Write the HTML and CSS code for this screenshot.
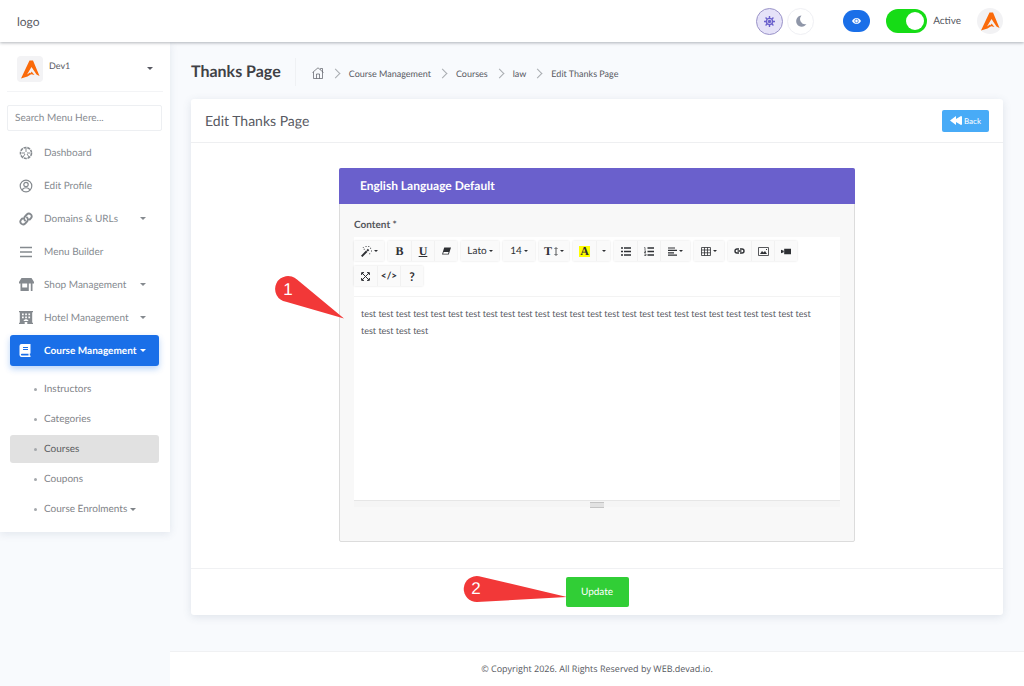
FILE: index.html
```html
<!DOCTYPE html>
<html lang="en">
<head>
    <meta charset="UTF-8">
    <meta name="viewport" content="width=device-width, initial-scale=1.0">
    <title>Edit Thanks Page</title>
    <link rel="stylesheet" href="styles.css">
</head>
<body>
    <svg class="sprite" aria-hidden="true">
        <symbol id="brand" viewBox="0 0 26 26">
            <path fill="#fa6a0a" d="M12.500 4.500h3.500L22.500 20l-3-1.500L14.500 11l-4.500 7.500 3-2 1.500 1.500-4 2.500L4 22.500z"/>
            <path fill="#fa6a0a" d="M14.500 15.500l3 3.500-4-1z"/>
        </symbol>
    </svg>

    <header class="topbar">
        <a class="logo" href="#">logo</a>
        <div class="topbar-tools">
            <button class="theme-btn selected" type="button" aria-label="Light theme">
                <svg viewBox="0 0 16 16" width="11" height="11" fill="none" stroke="#6a60cc">
                    <circle cx="8" cy="8" r="4.500" stroke-width="2"/>
                    <circle cx="8" cy="8" r="2.500" fill="#6a60cc" stroke="none"/>
                    <path stroke-width="2" d="M8 0v3M8 13v3M0 8h3M13 8h3M2.300 2.300l2 2M11.700 11.700l2 2M2.300 13.700l2-2M11.700 4.300l2-2"/>
                </svg>
            </button>
            <button class="theme-btn" type="button" aria-label="Dark theme">
                <svg viewBox="0 0 12 12" width="12" height="12" fill="#8f96a8"><path d="M6.500.5a5.600 5.600 0 1 0 5 8.600A5.200 5.200 0 0 1 6.500.5z"/></svg>
            </button>
            <button class="view-btn" type="button" aria-label="View site">
                <svg viewBox="0 0 18 12" width="9" height="6"><path fill="#fff" d="M0 6c4-8 14-8 18 0-4 8-14 8-18 0z"/><circle cx="9" cy="6" r="3.500" fill="none" stroke="#1a6fe8" stroke-width="1.500"/></svg>
            </button>
            <label class="switch"><input type="checkbox" checked><span>Active</span></label>
            <a class="avatar" href="#" aria-label="Account"><svg width="26" height="26"><use href="#brand"/></svg></a>
        </div>
    </header>

    <div class="layout">
        <nav class="sidebar">
            <div class="user">
                <svg class="user-pic" width="26" height="26"><use href="#brand"/></svg>
                <span class="user-name">Dev1</span>
                <i class="caret"></i>
            </div>
            <input class="search" type="search" placeholder="Search Menu Here..." aria-label="Search menu">
            <a class="nav-link" href="#">
                <svg viewBox="0 0 14 14" width="14" height="14" fill="none" stroke="currentColor"><circle cx="7" cy="7" r="5.500" stroke-width="1.600" stroke-dasharray="3 .8"/><path d="M7 2v4M3 7h3M11 7H8M4 11l2-3M10 11L8 8"/></svg>
                <span>Dashboard</span>
            </a>
            <a class="nav-link" href="#">
                <svg viewBox="0 0 14 14" width="14" height="14" fill="none" stroke="currentColor" stroke-width="1.200"><circle cx="7" cy="7" r="5.800"/><circle cx="7" cy="5.500" r="2.200"/><path d="M3.200 11c1-3 6.600-3 7.600 0"/></svg>
                <span>Edit Profile</span>
            </a>
            <a class="nav-link" href="#">
                <svg viewBox="0 0 14 14" width="14" height="14" fill="none" stroke="currentColor" stroke-width="1.900" stroke-linecap="round"><path d="M6 8.500c-1.200-1-1.200-2.800 0-4l1.800-2c2.600-2.600 6.600 1 4.200 3.600l-1.300 1.400M8 5.500c1.200 1 1.200 2.800 0 4l-1.800 2C3.600 14.100-.4 10.500 2 7.900l1.300-1.400"/></svg>
                <span>Domains &amp; URLs</span><i class="caret"></i>
            </a>
            <a class="nav-link" href="#">
                <svg viewBox="0 0 14 14" width="14" height="14" stroke="currentColor" stroke-width="1.500"><path d="M1 2.500h12M1 7h12M1 11.500h12"/></svg>
                <span>Menu Builder</span>
            </a>
            <a class="nav-link" href="#">
                <svg viewBox="0 0 15 13" width="15" height="13" fill="currentColor"><path d="M2.500 0h10L15 4v1.500H0V4zM1.500 5.500h1.700v4h5v-4h1.600V13H1.500zM11.800 5.500h1.700V13h-1.700z"/></svg>
                <span>Shop Management</span><i class="caret"></i>
            </a>
            <a class="nav-link" href="#">
                <svg viewBox="0 0 14 13" width="14" height="13" fill="currentColor"><path fill-rule="evenodd" d="M0 0h14v1.200h-.8v10.600h.8V13H8.300v-2H5.700v2H0v-1.200h.8V1.200H0zM3 2.500v1.700h1.700V2.500zM6.200 2.500v1.700h1.700V2.500zM9.400 2.500v1.700h1.700V2.500zM3 5.500v1.700h1.700V5.500zM6.200 5.500v1.700h1.700V5.500zM9.400 5.500v1.700h1.700V5.500zM4.500 10h5C9 7.700 5 7.700 4.500 10z"/></svg>
                <span>Hotel Management</span><i class="caret"></i>
            </a>
            <a class="nav-link active" href="#">
                <svg viewBox="0 0 12 13" width="12" height="13" fill="currentColor"><path fill-rule="evenodd" d="M2.500 0H11.500v9.500h-.7v2h.7V13h-9A2.300 2.300 0 0 1 .5 11V2A2 2 0 0 1 2.500 0zM4 3v1h5V3zM4 5v1h5V5zM2.800 9.700a.9.900 0 0 0 0 1.800h6.700V9.700z"/></svg>
                <span>Course Management</span><i class="caret"></i>
            </a>
            <ul class="subnav">
                <li><a href="#">Instructors</a></li>
                <li><a href="#">Categories</a></li>
                <li><a class="current" href="#">Courses</a></li>
                <li><a href="#">Coupons</a></li>
                <li><a href="#">Course Enrolments <i class="caret"></i></a></li>
            </ul>
        </nav>

        <div class="page">
            <main>
                <div class="page-head">
                    <h1>Thanks Page</h1>
                    <ol class="breadcrumb">
                        <li><a href="#" aria-label="Home"><svg viewBox="0 0 12 12" width="12" height="12" fill="none" stroke="currentColor" stroke-width=".7"><path d="M.5 5.500L6 .8l5.500 4.700M1.500 5v6.500h9V1.500h-2v1M4.500 11.500V7h3v4.500"/></svg></a></li>
                        <li><a href="#">Course Management</a></li>
                        <li><a href="#">Courses</a></li>
                        <li><a href="#">law</a></li>
                        <li><a href="#">Edit Thanks Page</a></li>
                    </ol>
                </div>

                <form class="card">
                    <div class="card-head">
                        <h2>Edit Thanks Page</h2>
                        <a class="back-btn" href="#">
                            <svg viewBox="0 0 12 9" width="12" height="9" fill="#fff"><path d="M6 0v3l5-3q1 0 1 1v7q0 1-1 1L6 6v3L0 4.500z"/></svg>
                            Back
                        </a>
                    </div>

                    <div class="card-body">
                        <section class="panel">
                            <h3>English Language Default</h3>
                            <div class="panel-body">
                                <label class="field-label" for="content">Content *</label>
                                <div class="editor">
                                    <div class="toolbar">
                                        <div class="group">
                                            <button class="wide" type="button" aria-label="Style"><svg viewBox="0 0 12 12" width="11" height="11" fill="currentColor"><path d="M0 10.500L5.500 5 7 6.500 1.500 12zM6 4.500L7.500 3 9 4.500 7.500 6zM2 1h1v1H2zM5 0h1v1H5zM8 0h1v1H8zM10 2h1v1h-1zM11 5h1v1h-1zM9 8h1v1H9zM3 3h1v1H3z"/></svg><i class="caret"></i></button>
                                        </div>
                                        <div class="group">
                                            <button class="serif" type="button" aria-label="Bold">B</button>
                                            <button class="serif under" type="button" aria-label="Underline">U</button>
                                            <button type="button" aria-label="Remove font style"><svg viewBox="0 0 10 8" width="9" height="8"><path fill="currentColor" d="M2.500 0H10L7.500 8H0z"/><path fill="#fff" d="M1.800 5.200h5.500L6.800 7H1.300z"/></svg></button>
                                        </div>
                                        <div class="group"><button class="font" type="button">Lato<i class="caret"></i></button></div>
                                        <div class="group"><button class="size" type="button">14<i class="caret"></i></button></div>
                                        <div class="group"><button class="wide serif" type="button" aria-label="Line height">T<svg viewBox="0 0 4 9" width="4" height="9" fill="none" stroke="currentColor" stroke-width=".8"><path d="M2 1v7M.5 2L2 .5 3.500 2M.5 7L2 8.500 3.500 7"/></svg><i class="caret"></i></button></div>
                                        <div class="group">
                                            <button class="serif" type="button" aria-label="Text colour"><mark>A</mark></button>
                                            <button class="narrow" type="button" aria-label="More colours"><i class="caret"></i></button>
                                        </div>
                                        <div class="group">
                                            <button type="button" aria-label="Bulleted list"><svg viewBox="0 0 10 9" width="10" height="9" stroke="currentColor" stroke-width="1.300"><path d="M0 1h2M0 4.500h2M0 8h2M3 1h7M3 4.500h7M3 8h7"/></svg></button>
                                            <button type="button" aria-label="Numbered list"><svg viewBox="0 0 10 9" width="10" height="9" fill="none" stroke="currentColor"><path stroke-width="1.300" d="M3.500 1H10M3.500 4.500H10M3.500 8H10"/><path stroke-width=".7" d="M.4.5H1V3M.3 4H2L.3 5.500H2M.3 7H2v1.500H.3"/></svg></button>
                                            <button class="wide" type="button" aria-label="Paragraph"><svg viewBox="0 0 9 9" width="9" height="9" stroke="currentColor" stroke-width="1.200"><path d="M0 1h7M0 3.400h9M0 5.800h6M0 8.200h9"/></svg><i class="caret"></i></button>
                                        </div>
                                        <div class="group"><button class="wide" type="button" aria-label="Table"><svg viewBox="0 0 10 9" width="10" height="9" fill="none" stroke="currentColor" stroke-width=".8"><path d="M.5.5h9v8h-9zM.5 3h9M.5 5.800h9M3.500.5v8M6.500.5v8"/></svg><i class="caret"></i></button></div>
                                        <div class="group">
                                            <button type="button" aria-label="Link"><svg viewBox="0 0 11 6" width="11" height="6" fill="none" stroke="currentColor" stroke-width="1.400"><path d="M5 1H3a2 2 0 0 0 0 4h2M6 1h2a2 2 0 0 1 0 4H6M3.500 3h4"/></svg></button>
                                            <button type="button" aria-label="Picture"><svg viewBox="0 0 11 9" width="11" height="9"><path fill="none" stroke="currentColor" stroke-width=".8" d="M.5.5h10v8H.5z"/><path fill="currentColor" d="M2 7l2-3 1.500 1.500L7 4l2 3zM8 2h1v1H8z"/></svg></button>
                                            <button type="button" aria-label="Video"><svg viewBox="0 0 11 7" width="10" height="7" fill="currentColor"><path d="M3.500.5H11v6H3.500zM0 1.500l3 1.300v1.500L0 5.500z"/></svg></button>
                                        </div>
                                        <div class="group">
                                            <button type="button" aria-label="Full screen"><svg viewBox="0 0 9 9" width="9" height="9" fill="none" stroke="currentColor"><path d="M1 1l7 7M8 1L1 8M.6 3V.6H3M6 .6h2.400V3M.6 6v2.400H3M6 8.400h2.400V6"/></svg></button>
                                            <button class="code" type="button" aria-label="Code view">&lt;/&gt;</button>
                                            <button class="help" type="button" aria-label="Help">?</button>
                                        </div>
                                    </div>
                                    <textarea id="content" spellcheck="false">test test test test test test test test test test test test test test test test test test test test test test test test test test test test test test</textarea>
                                    <div class="resize-bar"></div>
                                </div>
                            </div>
                            <svg class="callout callout-one" viewBox="0 0 70 46" width="70" height="46">
                                <path fill="#f23838" d="M22 4.500L69 43.500 11 26.800A13 13 0 1 1 22 4.500z"/>
                                <text x="13" y="20">1</text>
                            </svg>
                        </section>
                    </div>

                    <div class="card-foot">
                        <div class="submit">
                            <button class="update-btn" type="button">Update</button>
                            <svg class="callout callout-two" viewBox="0 0 105 28" width="105" height="28">
                                <path fill="#f23838" d="M16 1.200L104 22 14 27A13 13 0 1 1 16 1.200z"/>
                                <text x="13" y="19">2</text>
                            </svg>
                        </div>
                    </div>
                </form>
            </main>
            <footer>© Copyright 2026. All Rights Reserved by WEB.devad.io.</footer>
        </div>
    </div>
</body>
</html>
```
FILE: styles.css
```css
* {
    box-sizing: border-box;
}
body {
    margin: 0;
    min-height: 100vh;
    display: flex;
    flex-direction: column;
    background-color: #f8fafd;
    color: #575962;
    font-family: Lato, sans-serif;
    font-size: 10px;
    text-rendering: geometricPrecision;
}
a {
    color: inherit;
    text-decoration: none;
}
h1, h2, h3 {
    margin: 0;
}
button, input, textarea {
    font-family: inherit;
    font-size: 10px;
    text-rendering: inherit;
}
button {
    padding: 0;
    border: none;
    cursor: pointer;
}
svg {
    flex-shrink: 0;
}
.sprite {
    position: absolute;
    width: 0;
    height: 0;
}
.caret {
    width: 6px;
    border: 3px solid transparent;
    border-top-color: currentColor;
    border-bottom: none;
}

/* top bar */
.topbar {
    height: 42px;
    padding: 0 21px 0 17px;
    display: flex;
    align-items: center;
    justify-content: space-between;
    background-color: #fff;
    box-shadow: 0 1px 3px rgba(60, 70, 80, 0.4);
    position: relative;
}
.logo {
    font-size: 12px;
}
.topbar-tools {
    display: flex;
    align-items: center;
}
.theme-btn {
    width: 27px;
    height: 27px;
    margin-right: 4px;
    display: flex;
    align-items: center;
    justify-content: center;
    background-color: #fff;
    border: 1px solid #eff0f4;
    border-radius: 50%;
}
.theme-btn.selected {
    background-color: #e5e2f8;
    border-color: #9a93c8;
}
.view-btn {
    width: 27px;
    height: 22px;
    margin: 0 16px 0 25px;
    display: flex;
    align-items: center;
    justify-content: center;
    background-color: #1a6fe8;
    border-radius: 11px;
}
.switch {
    display: flex;
    align-items: center;
    gap: 6px;
}
.switch input {
    appearance: none;
    width: 41px;
    height: 24px;
    margin: 0;
    padding: 3px;
    background-color: #16dc16;
    border-radius: 12px;
}
.switch input::before {
    content: "";
    display: block;
    width: 18px;
    height: 18px;
    background-color: #fff;
    border-radius: 50%;
}
.switch input:checked::before {
    margin-left: auto;
}
.avatar {
    width: 26px;
    height: 26px;
    margin-left: 16px;
    background-color: #f2f2f4;
    border-radius: 50%;
}

/* sidebar */
.layout {
    flex: 1;
    display: flex;
    align-items: stretch;
}
.sidebar {
    width: 170px;
    align-self: flex-start;
    padding: 14px 7px 7px;
    background-color: #fff;
    box-shadow: 0 2px 8px rgba(69, 90, 120, 0.12);
}
.user {
    height: 36px;
    padding: 0 10px;
    display: flex;
    align-items: flex-start;
    border-bottom: 1px solid #f3f4f6;
}
.user-pic {
    background-color: #f3f3f5;
    border-radius: 4px;
}
.user-name {
    margin: 4px auto 0 6px;
    font-size: 9px;
}
.user .caret {
    margin-top: 11px;
}
.search {
    width: 155px;
    height: 26px;
    margin: 13px 0 6px;
    padding: 0 7px;
    border: 1px solid #edeff2;
    border-radius: 2px;
    outline: none;
}
.search::placeholder {
    color: #888b91;
}
.nav-link {
    height: 31px;
    margin: 0 4px 2px 3px;
    display: grid;
    grid-template-columns: 30px 1fr 19px;
    align-items: center;
    padding-left: 4px;
    color: #858a8f;
    border-radius: 3px;
}
.nav-link svg {
    justify-self: start;
    margin-left: 5px;
}
.nav-link.active {
    background-color: #1a6fe8;
    color: #fff;
    font-weight: bold;
    box-shadow: 0 3px 6px rgba(26, 111, 232, 0.3);
}
.subnav {
    margin: 9px 4px 0 3px;
    padding: 0;
    list-style: none;
}
.subnav a {
    height: 28px;
    margin-bottom: 2px;
    padding-left: 24px;
    display: flex;
    align-items: center;
    color: #7f8388;
    border-radius: 3px;
}
.subnav a::before {
    content: "";
    width: 3px;
    height: 3px;
    margin-right: 7px;
    background-color: #a4a8ac;
    border-radius: 50%;
}
.subnav .caret {
    margin-left: 3px;
}
.subnav .current {
    background-color: #e1e1e1;
    color: #5a5c60;
}

/* page */
.page {
    flex: 1;
    min-width: 0;
    display: flex;
    flex-direction: column;
}
main {
    flex: 1;
    padding: 16px 21px 36px;
}
.page-head {
    height: 28px;
    margin-bottom: 13px;
    display: flex;
    align-items: center;
}
h1 {
    font-size: 16px;
    line-height: 20px;
    color: #3f4146;
}
.breadcrumb {
    height: 28px;
    margin: 0 0 0 14px;
    padding: 2px 0 0 16px;
    display: flex;
    align-items: center;
    list-style: none;
    font-size: 9px;
    border-left: 1px solid #eff1f4;
}
.breadcrumb li {
    display: flex;
    align-items: center;
}
.breadcrumb svg {
    display: block;
}
.breadcrumb li + li::before {
    content: "";
    width: 6px;
    height: 6px;
    margin: 0 10px 0 8px;
    border: solid #a9acb1;
    border-width: 1px 1px 0 0;
    transform: rotate(45deg);
}
.card {
    background-color: #fff;
    border-radius: 3px;
    box-shadow: 0 2px 8px rgba(69, 90, 120, 0.14);
}
.card-head {
    height: 44px;
    padding: 0 14px;
    display: flex;
    align-items: center;
    justify-content: space-between;
    border-bottom: 1px solid #eeeff1;
}
h2 {
    font-size: 14px;
    font-weight: normal;
}
.back-btn {
    width: 47px;
    height: 22px;
    display: flex;
    align-items: center;
    justify-content: center;
    gap: 2px;
    background-color: #48abf7;
    color: #fff;
    font-size: 8px;
    border-radius: 2px;
}
.card-body {
    padding: 25px 0 26px;
}
.panel {
    width: 516px;
    max-width: 100%;
    margin: 0 auto;
    position: relative;
    background-color: #f8f8f8;
    border: 1px solid #dcdcdc;
    border-radius: 2px;
}
h3 {
    height: 36px;
    margin: -1px -1px 0;
    padding-left: 21px;
    background-color: #6a60cc;
    color: #fff;
    font-size: 12px;
    line-height: 36px;
    border-radius: 2px 2px 0 0;
}
.panel-body {
    padding: 15px 14px 34px;
}
.field-label {
    display: block;
    height: 18px;
    color: #54565c;
    line-height: 13px;
    font-weight: bold;
}
.editor {
    background-color: #fff;
}
.toolbar {
    height: 60px;
    padding: 4px 0 0;
    display: flex;
    flex-wrap: wrap;
    align-content: flex-start;
    gap: 5px 4px;
    border-bottom: 1px solid #f3f3f3;
}
.group {
    display: flex;
    box-shadow: 0 0 2px rgba(0, 0, 0, 0.12);
}
.group button {
    width: 23px;
    height: 20px;
    display: flex;
    align-items: center;
    justify-content: center;
    gap: 2px;
    background-color: #fafafa;
    color: #2e3034;
}
.group button + button {
    border-left: 1px solid #f1f1f1;
}
.group .caret {
    width: 4px;
    border-width: 2px;
    border-bottom: none;
}
.group .wide {
    width: 30px;
}
.group .font {
    width: 38px;
}
.group .size {
    width: 32px;
}
.group .narrow {
    width: 14px;
}
.group .serif {
    font-family: "Liberation Serif", serif;
    font-size: 12px;
    font-weight: bold;
}
.group .under {
    text-decoration: underline;
}
.group .code, .group .help {
    font-weight: bold;
}
.group .help {
    font-size: 12px;
}
mark {
    padding: 0 1px;
    background-color: #ff0;
    color: inherit;
    line-height: 11px;
}
textarea {
    display: block;
    width: 100%;
    height: 203px;
    padding: 8px 14px 8px 7px;
    border: none;
    outline: none;
    resize: none;
    color: #575962;
    font-size: 9px;
    line-height: 17px;
}
.resize-bar {
    height: 7px;
    display: flex;
    justify-content: center;
    background-color: #f5f5f5;
    border-top: 1px solid #e6e6e6;
}
.resize-bar::after {
    content: "";
    width: 14px;
    height: 4px;
    margin-top: 1px;
    background-color: #e2e2e2;
    border: solid #c4c4c4;
    border-width: 1px 0;
}
.card-foot {
    padding: 8px 0;
    display: flex;
    justify-content: center;
    border-top: 1px solid #f0f1f3;
}
.submit {
    position: relative;
}
.update-btn {
    display: block;
    width: 63px;
    height: 30px;
    background-color: #31ce36;
    color: #fff;
    border-radius: 2px;
}

/* numbered pointers */
.callout {
    position: absolute;
    pointer-events: none;
}
.callout text {
    fill: #fff;
    font-family: "Liberation Sans", sans-serif;
    font-size: 17px;
    text-anchor: middle;
}
.callout-one {
    top: 106px;
    left: -65px;
}
.callout-two {
    top: -2px;
    left: -103px;
}
footer {
    padding: 10px 0;
    background-color: #fff;
    border-top: 1px solid #f0f1f3;
    font-family: "Open Sans", sans-serif;
    font-size: 9px;
    line-height: 14px;
    text-align: center;
}
```
